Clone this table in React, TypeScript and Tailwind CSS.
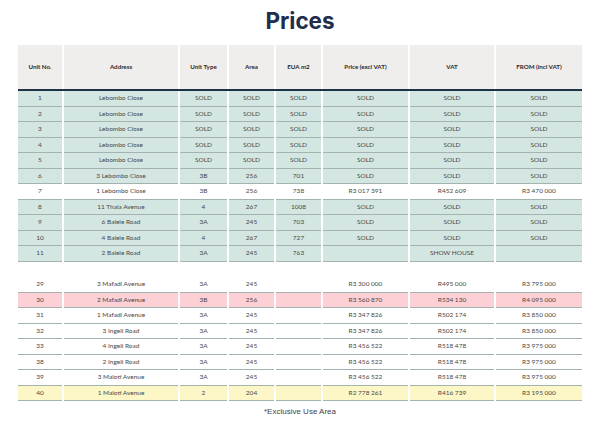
import React from "react";

type Row = { cells: string[]; bg: string };

const TEAL = "bg-[#d4e6e2]";
const WHITE = "bg-white";
const PINK = "bg-[#fcd0d4]";
const YELLOW = "bg-[#fdf6c6]";

const S = "SOLD";

const first: Row[] = [
  { cells: ["1", "Lebombo Close", S, S, S, S, S, S], bg: TEAL },
  { cells: ["2", "Lebombo Close", S, S, S, S, S, S], bg: TEAL },
  { cells: ["3", "Lebombo Close", S, S, S, S, S, S], bg: TEAL },
  { cells: ["4", "Lebombo Close", S, S, S, S, S, S], bg: TEAL },
  { cells: ["5", "Lebombo Close", S, S, S, S, S, S], bg: TEAL },
  { cells: ["6", "3 Lebombo Close", "3B", "256", "701", S, S, S], bg: TEAL },
  { cells: ["7", "1 Lebombo Close", "3B", "256", "738", "R3 017 391", "R452 609", "R3 470 000"], bg: WHITE },
  { cells: ["8", "11 Thala Avenue", "4", "267", "1008", S, S, S], bg: TEAL },
  { cells: ["9", "6 Balele Road", "3A", "245", "703", S, S, S], bg: TEAL },
  { cells: ["10", "4 Balele Road", "4", "267", "727", S, S, S], bg: TEAL },
  { cells: ["11", "2 Balele Road", "3A", "245", "763", "", "SHOW HOUSE", ""], bg: TEAL },
];

const second: Row[] = [
  { cells: ["29", "3 Mafadi Avenue", "3A", "245", "", "R3 300 000", "R495 000", "R3 795 000"], bg: WHITE },
  { cells: ["30", "2 Mafadi Avenue", "3B", "256", "", "R3 560 870", "R534 130", "R4 095 000"], bg: PINK },
  { cells: ["31", "1 Mafadi Avenue", "3A", "245", "", "R3 347 826", "R502 174", "R3 850 000"], bg: WHITE },
  { cells: ["32", "3 Ingeli Road", "3A", "245", "", "R3 347 826", "R502 174", "R3 850 000"], bg: WHITE },
  { cells: ["33", "4 Ingeli Road", "3A", "245", "", "R3 456 522", "R518 478", "R3 975 000"], bg: WHITE },
  { cells: ["38", "2 Ingeli Road", "3A", "245", "", "R3 456 522", "R518 478", "R3 975 000"], bg: WHITE },
  { cells: ["39", "3 Maloti Avenue", "3A", "245", "", "R3 456 522", "R518 478", "R3 975 000"], bg: WHITE },
  { cells: ["40", "1 Maloti Avenue", "2", "204", "", "R2 778 261", "R416 739", "R3 195 000"], bg: YELLOW },
];

const headers = ["Unit No.", "Address", "Unit Type", "Area", "EUA m2", "Price (excl VAT)", "VAT", "FROM (incl VAT)"];

const GRID = "grid grid-cols-[44px_114px_47px_45px_45px_85px_84px_86px] gap-x-[2px]";

function BodyRow({ row }: { row: Row }) {
  return (
    <div className={GRID}>
      {row.cells.map((c, i) => (
        <div
          key={i}
          className={`${row.bg} h-[15.5px] border-b border-[#a3b3b0] flex items-center justify-center text-[6.5px] text-[#484848] leading-none whitespace-nowrap`}
        >
          {c}
        </div>
      ))}
    </div>
  );
}

export default function App() {
  return (
    <div className="w-[600px] h-[424px] bg-white overflow-hidden" style={{ fontFamily: "Lato, 'Open Sans', sans-serif" }}>
      <div className="pt-[10px] text-center">
        <h1 className="text-[22.5px] leading-[22px] font-bold text-[#1f2e4c]" style={{ fontFamily: "Inter, sans-serif" }}>
          Prices
        </h1>
      </div>
      <div className="mx-[18px] mt-[13px] w-[564px]">
        <div className={GRID}>
          {headers.map((h, i) => (
            <div
              key={i}
              className="bg-[#f0eeec] h-[44px] flex items-center justify-center text-[6.2px] font-bold text-[#2b2b2b] leading-none whitespace-nowrap"
            >
              {h}
            </div>
          ))}
        </div>
        <div className="h-[2px] bg-[#1e3346]" />
        {first.map((r, i) => (
          <BodyRow key={i} row={r} />
        ))}
        <div className="h-[15.5px]" />
        {second.map((r, i) => (
          <BodyRow key={i} row={r} />
        ))}
      </div>
      <div
        className="mt-[6px] text-center text-[8px] text-[#444] leading-[10px]"
        style={{ fontFamily: "'Liberation Sans', Arial, sans-serif" }}
      >
        *Exclusive Use Area
      </div>
    </div>
  );
}
